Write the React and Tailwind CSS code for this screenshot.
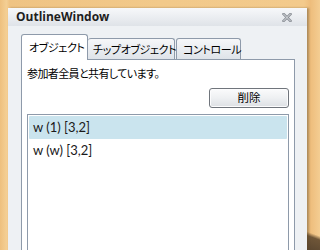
import React from "react";

const jp = { fontFamily: '"Noto Sans CJK JP", "Noto Sans", sans-serif' };
const ui = { fontFamily: '"Open Sans", "Noto Sans CJK JP", sans-serif' };
const list = { fontFamily: 'Lato, "Open Sans", sans-serif' };

function CloseIcon() {
  return (
    <svg width="10" height="9" viewBox="0 0 10 9">
      <path d="M1.5 1 L8.5 8 M8.5 1 L1.5 8" stroke="#8a8f96" strokeWidth="2.6" strokeLinecap="square" />
      <path d="M1.5 1 L8.5 8 M8.5 1 L1.5 8" stroke="#e4e7ea" strokeWidth="0.9" strokeLinecap="square" />
    </svg>
  );
}

export default function App() {
  return (
    <div className="relative w-[320px] h-[250px] overflow-hidden">
      <div className="absolute inset-0 bg-[linear-gradient(90deg,#eec07e_0%,#f4cf94_2%,#efc383_3%,#f2c98a_50%,#f3ca8c_95%,#eebd7c_97%,#f4cd92_100%)]" />
      <div className="absolute right-0 bottom-0 w-[14px] h-[22px] bg-[linear-gradient(200deg,transparent_30%,#6f5638_45%,#5a4630_100%)]" />
      <div className="relative ml-[8px] mt-[8px] w-[299px] h-[260px] bg-[#eef1f4] shadow-[2px_0_2px_rgba(90,70,40,0.45)] flex flex-col">
        <div className="h-[18px] bg-[linear-gradient(180deg,#f7f8fa,#dfe3e8)] flex items-center justify-between pl-[8px] pr-[15px]">
          <span className="text-[12px] font-bold text-[#1e1e1e] leading-none" style={ui}>
            OutlineWindow
          </span>
          <CloseIcon />
        </div>
        <div className="pl-[13px] pr-[12px] pt-[8px] flex flex-col">
          <div className="flex items-end h-[26px] text-[11px] text-black whitespace-nowrap tracking-[-0.4px] [font-feature-settings:'palt']" style={jp}>
            <div className="relative z-10 h-[26px] w-[67px] bg-white border border-b-0 border-[#8e9aaa] rounded-t-[3px] flex items-center pl-[7px] pb-[1px]">
              オブジェクト
            </div>
            <div className="h-[22px] w-[87px] bg-[linear-gradient(180deg,#f6f7f9,#dde2e8)] border border-l-0 border-b-0 border-[#8e9aaa] rounded-t-[3px] flex items-center pl-[5px]">
              チップオブジェクト
            </div>
            <div className="ml-[1px] h-[22px] w-[65px] bg-[linear-gradient(180deg,#f6f7f9,#dde2e8)] border border-b-0 border-[#8e9aaa] rounded-t-[3px] flex items-center pl-[6px]">
              コントロール
            </div>
          </div>
          <div className="-mt-[1px] h-[200px] bg-white border border-[#8e9aaa] pl-[5px] pr-[5px] pt-[6px] flex flex-col">
            <div className="text-[11px] leading-[14px] text-black whitespace-nowrap tracking-[-0.6px] [font-feature-settings:'palt']" style={jp}>
              参加者全員と共有しています。
            </div>
            <div className="flex justify-end mt-[8px]">
              <div
                className="w-[80px] h-[20px] rounded-[3px] border border-[#70757c] bg-[linear-gradient(180deg,#fbfbfc_0%,#eef0f2_50%,#dde0e4_100%)] shadow-[inset_0_0_0_1px_#fcfcfd] flex items-center justify-center text-[11.5px] text-black"
                style={jp}
              >
                削除
              </div>
            </div>
            <div className="mt-[6px] flex-1 border border-[#8e9aaa] p-[1px] flex flex-col">
              <div className="h-[23px] bg-[#cae4ee] rounded-[1px] flex items-center pl-[4px] text-[13px] text-[#1a1a1a]" style={list}>
                w (1) [3,2]
              </div>
              <div className="h-[23px] flex items-center pl-[4px] text-[13px] text-[#1a1a1a]" style={list}>
                w (w) [3,2]
              </div>
            </div>
          </div>
        </div>
      </div>
    </div>
  );
}
